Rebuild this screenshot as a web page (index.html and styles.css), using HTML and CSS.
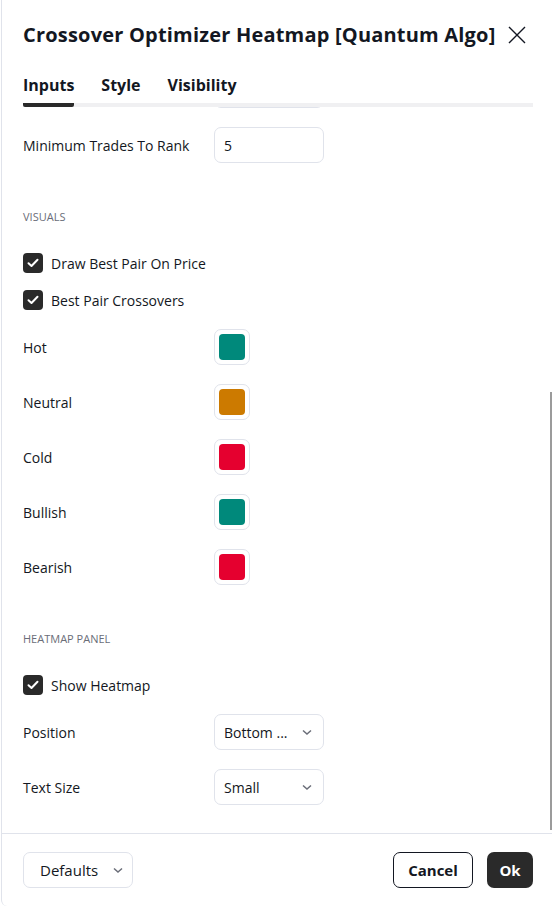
FILE: index.html
```html
<!DOCTYPE html>
<html lang="en">
<head>
    <meta charset="UTF-8">
    <meta name="viewport" content="width=device-width, initial-scale=1.0">
    <title>Crossover Optimizer Heatmap</title>
    <link rel="stylesheet" href="styles.css">
</head>
<body>
    <div class="dialog">
        <div class="header">
            <h1>Crossover Optimizer Heatmap [Quantum Algo]</h1>
            <button class="close" aria-label="Close">
                <svg width="18" height="18" viewBox="0 0 18 18"><path d="M1 1L17 17M17 1L1 17" stroke="#131722" stroke-width="1.4" fill="none"/></svg>
            </button>
        </div>

        <div class="tabs">
            <span class="tab active">Inputs</span>
            <span class="tab">Style</span>
            <span class="tab">Visibility</span>
        </div>

        <div class="content">
            <div class="row hidden-row">
                <span class="label"></span>
                <div class="field"></div>
            </div>

            <div class="row">
                <span class="label">Minimum Trades To Rank</span>
                <div class="field">5</div>
            </div>

            <div class="section">VISUALS</div>

            <label class="check first">
                <span class="box"><svg width="12" height="10" viewBox="0 0 12 10"><path d="M1.5 5.2L4.5 8L10.5 1.8" stroke="#fff" stroke-width="2" fill="none" stroke-linecap="round" stroke-linejoin="round"/></svg></span>
                Draw Best Pair On Price
            </label>
            <label class="check">
                <span class="box"><svg width="12" height="10" viewBox="0 0 12 10"><path d="M1.5 5.2L4.5 8L10.5 1.8" stroke="#fff" stroke-width="2" fill="none" stroke-linecap="round" stroke-linejoin="round"/></svg></span>
                Best Pair Crossovers
            </label>

            <div class="row after-check">
                <span class="label">Hot</span>
                <div class="swatch"><span class="teal"></span></div>
            </div>
            <div class="row">
                <span class="label">Neutral</span>
                <div class="swatch"><span class="orange"></span></div>
            </div>
            <div class="row">
                <span class="label">Cold</span>
                <div class="swatch"><span class="red"></span></div>
            </div>
            <div class="row">
                <span class="label">Bullish</span>
                <div class="swatch"><span class="teal"></span></div>
            </div>
            <div class="row">
                <span class="label">Bearish</span>
                <div class="swatch"><span class="red"></span></div>
            </div>

            <div class="section">HEATMAP PANEL</div>

            <label class="check first">
                <span class="box"><svg width="12" height="10" viewBox="0 0 12 10"><path d="M1.5 5.2L4.5 8L10.5 1.8" stroke="#fff" stroke-width="2" fill="none" stroke-linecap="round" stroke-linejoin="round"/></svg></span>
                Show Heatmap
            </label>

            <div class="row after-check">
                <span class="label">Position</span>
                <div class="field select">Bottom ...
                    <svg width="12" height="8" viewBox="0 0 12 8"><path d="M2 2.5L6 6L10 2.5" stroke="#6a6d78" stroke-width="1.5" fill="none"/></svg>
                </div>
            </div>
            <div class="row">
                <span class="label">Text Size</span>
                <div class="field select">Small
                    <svg width="12" height="8" viewBox="0 0 12 8"><path d="M2 2.5L6 6L10 2.5" stroke="#6a6d78" stroke-width="1.5" fill="none"/></svg>
                </div>
            </div>

            <div class="scrollbar"></div>
        </div>

        <div class="footer">
            <button class="defaults">Defaults
                <svg width="12" height="8" viewBox="0 0 12 8"><path d="M2 2.5L6 6L10 2.5" stroke="#6a6d78" stroke-width="1.5" fill="none"/></svg>
            </button>
            <div class="actions">
                <button class="cancel">Cancel</button>
                <button class="ok">Ok</button>
            </div>
        </div>
    </div>
</body>
</html>
```

FILE: styles.css
```css
* {
    box-sizing: border-box;
}

body {
    margin: 0;
    background-color: #fff;
    color: #131722;
    font-family: "Open Sans", Lato, sans-serif;
    font-size: 14px;
}

.dialog {
    margin-left: 1px;
    height: 906px;
    border-left: 1px solid #e0e3eb;
    border-bottom-left-radius: 6px;
    display: flex;
    flex-direction: column;
    overflow: hidden;
}

.header {
    display: flex;
    align-items: center;
    justify-content: space-between;
    padding: 20px 26px 0 21px;
    height: 50px;
}

h1 {
    margin: 0;
    font-size: 20px;
    font-weight: 700;
    line-height: 26px;
    letter-spacing: 0.2px;
}

.close {
    border: none;
    background: none;
    padding: 0;
    display: flex;
}

.tabs {
    display: flex;
    gap: 27px;
    margin: 0 19px 0 21px;
    padding-top: 24px;
    height: 57px;
    border-bottom: 4px solid #f0f0f2;
}

.tab {
    font-size: 16px;
    font-weight: 700;
    line-height: 22px;
    height: 29px;
}

.tab.active {
    border-bottom: 4px solid #2a2a2a;
    border-radius: 2px;
    margin-bottom: -4px;
    height: 33px;
}

.content {
    flex: 1;
    position: relative;
    overflow: hidden;
    padding: 0 0 0 21px;
}

.row {
    display: flex;
    align-items: center;
    height: 36px;
    margin-top: 19px;
}

.hidden-row {
    margin-top: -35px;
}

.label {
    width: 191px;
}

.field {
    width: 110px;
    height: 36px;
    border: 1px solid #e0e3eb;
    border-radius: 7px;
    padding: 0 9px;
    display: flex;
    align-items: center;
    justify-content: space-between;
}

.select svg {
    margin-right: 1px;
}

.section {
    margin-top: 46px;
    height: 16px;
    line-height: 16px;
    font-size: 11px;
    color: #6a6d78;
}

.check {
    display: flex;
    align-items: center;
    gap: 8px;
    height: 20px;
    margin-top: 17px;
}

.check.first {
    margin-top: 28px;
}

.box {
    width: 20px;
    height: 20px;
    border-radius: 4px;
    background-color: #2a2a2a;
    display: flex;
    align-items: center;
    justify-content: center;
}

.row.after-check {
    margin-top: 19px;
}

.swatch {
    width: 36px;
    height: 36px;
    border: 1px solid #e0e3eb;
    border-radius: 7px;
    display: flex;
    align-items: center;
    justify-content: center;
}

.swatch span {
    width: 26px;
    height: 26px;
    border-radius: 4px;
}

.teal {
    background-color: #00897b;
}

.orange {
    background-color: #cc7a00;
}

.red {
    background-color: #e5002f;
}

.scrollbar {
    position: absolute;
    right: 0;
    top: 285px;
    width: 2px;
    height: 438px;
    background-color: #9b9b9b;
}

.footer {
    height: 73px;
    border-top: 1px solid #e0e3eb;
    display: flex;
    justify-content: space-between;
    align-items: flex-start;
    padding: 18px 19px 0 21px;
}

button {
    font-family: inherit;
    font-size: 15px;
    color: #131722;
    cursor: pointer;
}

.defaults {
    width: 110px;
    height: 36px;
    border: 1px solid #e0e3eb;
    border-radius: 7px;
    background: #fff;
    display: flex;
    align-items: center;
    justify-content: space-between;
    padding: 0 8px 0 16px;
}

.actions {
    display: flex;
    gap: 14px;
}

.cancel {
    height: 36px;
    width: 80px;
    border: 1px solid #131722;
    border-radius: 7px;
    background: #fff;
    font-weight: 700;
}

.ok {
    height: 36px;
    width: 46px;
    border: none;
    border-radius: 7px;
    background-color: #2a2a2a;
    color: #fff;
    font-weight: 700;
}
```
